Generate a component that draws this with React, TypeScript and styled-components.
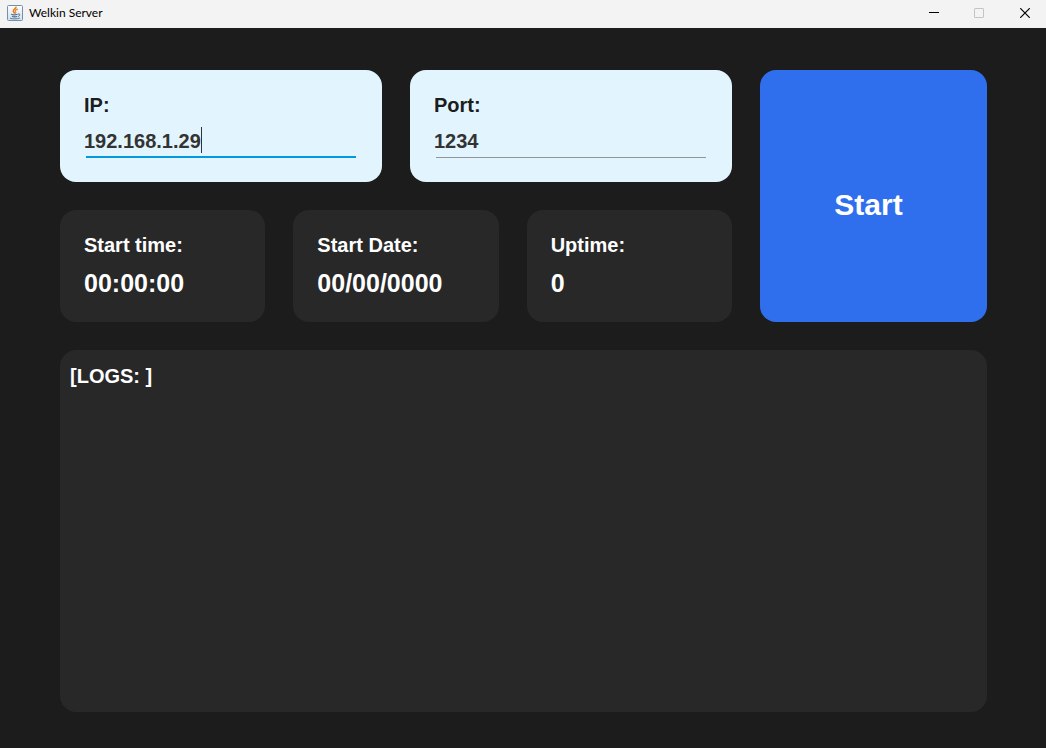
import React from "react";
import styled, { createGlobalStyle, css } from "styled-components";

const GlobalStyle = createGlobalStyle`
  *, *::before, *::after { box-sizing: border-box; }
  body {
    margin: 0;
    background: #1c1c1c;
    font-family: "Liberation Sans", Arial, sans-serif;
  }
`;

const Window = styled.div`
  display: flex;
  flex-direction: column;
  min-height: 100vh;
`;

const TitleBar = styled.header`
  display: flex;
  align-items: center;
  height: 28px;
  padding: 0 5px 3px 7px;
  background: #f3f3f3;
  color: #000;
`;

const Title = styled.h1`
  flex: 1;
  margin: 0 0 0 6px;
  font: 400 12px/16px "Segoe UI", Lato, sans-serif;
`;

const WindowControls = styled.div`
  display: flex;
  gap: 14px;
`;

const WindowButton = styled.button`
  display: grid;
  place-items: center;
  width: 32px;
  height: 24px;
  padding: 0;
  border: 0;
  background: none;
  color: #000;

  &:disabled {
    color: #c4c4c4;
  }
`;

const Content = styled.main`
  flex: 1;
  display: flex;
  flex-direction: column;
  gap: 28px;
  padding: 42px 59px 36px 60px;
`;

const Dashboard = styled.div`
  display: grid;
  grid-template-columns: 1fr 227px;
  gap: 28px;
`;

const CardRows = styled.div`
  display: flex;
  flex-direction: column;
  gap: 28px;
`;

const CardRow = styled.div<{ $columns: number }>`
  display: grid;
  grid-template-columns: repeat(${(p) => p.$columns}, 1fr);
  gap: 28px;
`;

const Card = styled.section<{ $light?: boolean }>`
  min-width: 0;
  height: 112px;
  padding: 24px;
  border-radius: 16px;
  background: ${(p) => (p.$light ? "#e2f5ff" : "#282828")};
  color: ${(p) => (p.$light ? "#1c1c1c" : "#fff")};
`;

const labelText = css`
  display: block;
  font-size: 20px;
  font-weight: 700;
  line-height: 22px;
  white-space: nowrap;
`;

const FieldLabel = styled.label`
  ${labelText}
`;

const StatLabel = styled.h2`
  ${labelText}
  margin: 0;
`;

const StatValue = styled.output`
  display: block;
  margin-top: 12px;
  font-size: 25px;
  font-weight: 700;
  line-height: 30px;
`;

const Field = styled.div<{ $active?: boolean }>`
  position: relative;
  height: 42px;
  padding-top: 11px;

  &::after {
    content: "";
    position: absolute;
    left: 2px;
    right: 2px;
    bottom: 0;
    height: ${(p) => (p.$active ? 2 : 1)}px;
    background: ${(p) => (p.$active ? "#0399dc" : "#8f979b")};
  }
`;

const TextInput = styled.input`
  display: block;
  width: 100%;
  height: 28px;
  padding: 0;
  border: 0;
  outline: 0;
  background: transparent;
  color: #333;
  caret-color: transparent;
  font: 700 20px/28px "Liberation Sans", Arial, sans-serif;
`;

const Caret = styled.span`
  position: absolute;
  top: 11px;
  left: 117px;
  width: 1px;
  height: 26px;
  background: #333;
`;

const StartButton = styled.button`
  padding: 18px 10px 0 0;
  border: 0;
  border-radius: 16px;
  background: #2f6fed;
  color: #fff;
  font: 700 30px/36px "Liberation Sans", Arial, sans-serif;
`;

const LogPanel = styled.section`
  flex: 1;
  padding: 14px 10px;
  border-radius: 16px;
  background: #282828;
  color: #fff;
  font-size: 20px;
  font-weight: 700;
  line-height: 24px;
`;

function JavaIcon() {
  return (
    <svg width="16" height="16" viewBox="0 0 16 16" fill="none" aria-hidden="true">
      <defs>
        <linearGradient id="tile" x1="0" y1="0" x2="0" y2="1">
          <stop offset="0" stopColor="#fdfefe" />
          <stop offset="1" stopColor="#d3dfe8" />
        </linearGradient>
      </defs>
      <rect x="0.5" y="0.5" width="15" height="15" rx="1" fill="url(#tile)" stroke="#7192ac" />
      <path d="M9 1.6C9.6 3.8 5.8 4.3 6.3 6.2C6.5 7 7.4 7.6 7.6 8.6" stroke="#e8791d" strokeWidth="1.5" />
      <path d="M10.8 4.2C8.6 4.8 7.8 5.6 8.5 6.5C9 7.2 8.8 7.8 8.2 8.5" stroke="#ec8a32" strokeWidth="1.2" />
      <path d="M4.2 9.3C5.5 9.9 9 9.8 10.6 9.3" stroke="#41678d" strokeWidth="1.1" />
      <path d="M5 11.4C6.7 12 8.7 11.9 10.2 11.4" stroke="#41678d" strokeWidth="1.1" />
      <path d="M3 13.2C5.5 14.2 10.5 14.1 12.8 13" stroke="#5b7f9f" />
      <path d="M11 9C13.6 8.5 13.4 10.8 11 11.5" stroke="#41678d" strokeWidth="0.9" />
    </svg>
  );
}

const stats = [
  { label: "Start time:", value: "00:00:00" },
  { label: "Start Date:", value: "00/00/0000" },
  { label: "Uptime:", value: "0" },
];

export default function App() {
  return (
    <Window>
      <GlobalStyle />
      <TitleBar>
        <JavaIcon />
        <Title>Welkin Server</Title>
        <WindowControls>
          <WindowButton aria-label="Minimize">
            <svg width="12" height="11" viewBox="0 0 12 11">
              <path d="M2 5.5H12" stroke="currentColor" />
            </svg>
          </WindowButton>
          <WindowButton aria-label="Maximize" disabled>
            <svg width="10" height="10" viewBox="0 0 10 10" fill="none">
              <rect x="0.5" y="0.5" width="9" height="9" rx="0.5" stroke="currentColor" />
            </svg>
          </WindowButton>
          <WindowButton aria-label="Close">
            <svg width="10" height="10" viewBox="0 0 10 10">
              <path d="M0.2 0.2L9.8 9.8M9.8 0.2L0.2 9.8" stroke="currentColor" strokeWidth="1.2" />
            </svg>
          </WindowButton>
        </WindowControls>
      </TitleBar>
      <Content>
        <Dashboard>
          <CardRows>
            <CardRow $columns={2}>
              <Card $light>
                <FieldLabel htmlFor="ip">IP:</FieldLabel>
                <Field $active>
                  <TextInput id="ip" defaultValue="192.168.1.29" />
                  <Caret />
                </Field>
              </Card>
              <Card $light>
                <FieldLabel htmlFor="port">Port:</FieldLabel>
                <Field>
                  <TextInput id="port" defaultValue="1234" />
                </Field>
              </Card>
            </CardRow>
            <CardRow $columns={3}>
              {stats.map((stat) => (
                <Card key={stat.label}>
                  <StatLabel>{stat.label}</StatLabel>
                  <StatValue>{stat.value}</StatValue>
                </Card>
              ))}
            </CardRow>
          </CardRows>
          <StartButton>Start</StartButton>
        </Dashboard>
        <LogPanel>[LOGS: ]</LogPanel>
      </Content>
    </Window>
  );
}
